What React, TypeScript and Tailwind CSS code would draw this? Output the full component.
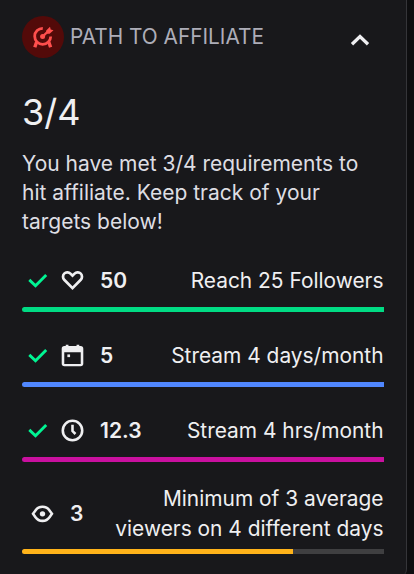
import type { ReactNode } from "react"

function CheckIcon() {
    return (
        <svg width="20" height="16" viewBox="0 0 20 16" fill="none" className="shrink-0">
            <path d="M1.3 6.9 7.5 12.7 18.2 2" stroke="#00f593" strokeWidth="2.9" />
        </svg>
    )
}

function HeartIcon() {
    return (
        <svg width="27" height="27" viewBox="0 0 20 20" fill="currentColor" className="shrink-0">
            <path
                fillRule="evenodd"
                clipRule="evenodd"
                d="M9.171 4.171A4 4 0 0 0 6.343 3H6a4 4 0 0 0-4 4v.343a4 4 0 0 0 1.172 2.829L10 17l6.828-6.828A4 4 0 0 0 18 7.343V7a4 4 0 0 0-4-4h-.343a4 4 0 0 0-2.829 1.172L10 5l-.829-.829zm.829 10l5.414-5.414A2 2 0 0 0 16 7.343V7a2 2 0 0 0-2-2h-.343a2 2 0 0 0-1.414.586L10 7.828 7.757 5.586A2 2 0 0 0 6.343 5H6a2 2 0 0 0-2 2v.343a2 2 0 0 0 .586 1.414L10 14.171z"
            />
        </svg>
    )
}

function CalendarIcon() {
    return (
        <svg width="27" height="27" viewBox="0 0 20 20" fill="currentColor" className="shrink-0">
            <path d="M5 2h2v1h6V2h2v1h1a2 2 0 0 1 2 2v11a2 2 0 0 1-2 2H4a2 2 0 0 1-2-2V5a2 2 0 0 1 2-2h1V2zM3.9 7.6v8.7h12.2V7.6H3.9z" fillRule="evenodd" />
            <path d="M6.2 9.2h2v2h-2z" />
        </svg>
    )
}

function ClockIcon() {
    return (
        <svg width="27" height="27" viewBox="0 0 20 20" fill="none" stroke="currentColor" strokeWidth="1.9" className="shrink-0">
            <circle cx="10" cy="10" r="7.2" />
            <path d="M10 5.8v4.6l2.2 2.2" />
        </svg>
    )
}

function EyeIcon() {
    return (
        <svg width="27" height="27" viewBox="0 0 20 20" fill="none" className="shrink-0">
            <path d="M3 9.5 4.8 7A6.3 6.3 0 0 1 10 4.3 6.3 6.3 0 0 1 15.2 7L17 9.5 15.2 12A6.3 6.3 0 0 1 10 14.7 6.3 6.3 0 0 1 4.8 12z" stroke="currentColor" strokeWidth="1.9" />
            <circle cx="10" cy="9.5" r="2" fill="currentColor" />
        </svg>
    )
}

function TargetIcon() {
    return (
        <svg width="22" height="22" viewBox="0 0 22 22" fill="none" stroke="#ff4f4d" className="shrink-0">
            {/* ring, open towards the dart */}
            <path d="M10.8 2.3A8 8 0 1 0 18.7 10.4" strokeWidth="2.8" />
            {/* legs */}
            <path d="M4.7 15.8 2.8 21.2M16.7 15.8l1.9 5.4" strokeWidth="3.4" />
            {/* dart */}
            <path d="M10.6 10.6 15.6 5.7" strokeWidth="2.3" />
            <path d="M14.2 7.8V4.6L18 .7l.7 2.8 2.8.7-3.9 3.6z" fill="#ff4f4d" stroke="none" />
            <circle cx="10.6" cy="10.6" r="2.5" fill="#ff4f4d" stroke="none" />
        </svg>
    )
}

function Progress({ percent, color }: { percent: number; color: string }) {
    return (
        <div className="h-[5px] w-full overflow-hidden rounded-l-full rounded-r-sm bg-[#3f3f41]">
            <div className={`h-full ${color}`} style={{ width: `${percent}%` }} />
        </div>
    )
}

type Goal = {
    icon: ReactNode
    value: string
    label: string
    color: string
}

const goals: Goal[] = [
    { icon: <HeartIcon />, value: "50", label: "Reach 25 Followers", color: "bg-[#00db84]" },
    { icon: <CalendarIcon />, value: "5", label: "Stream 4 days/month", color: "bg-[#5087ff]" },
    { icon: <ClockIcon />, value: "12.3", label: "Stream 4 hrs/month", color: "bg-[#c9109f]" },
]

export default function App() {
    return (
        <main className="h-[574px] w-[414px] overflow-hidden bg-[#0e0e10] font-['Inter',sans-serif] text-[#efeff1]">
            <section className="flex h-[577px] w-[407px] flex-col rounded-br-lg border-r border-[#353539] bg-[#18181b] pr-[22px] pl-[22px]">
                <header className="flex items-center pt-4">
                    <div className="flex size-[42px] items-center justify-center rounded-full bg-[#530a09]">
                        <TargetIcon />
                    </div>
                    <h2 className="ml-1.5 text-[20.8px] leading-[42px] whitespace-nowrap text-[#adadb8]">PATH TO AFFILIATE</h2>
                    <svg width="20" height="14" viewBox="0 0 20 14" fill="none" className="mt-1.5 mr-[14px] ml-auto">
                        <path d="M2 11.2 10 3.6l8 7.6" stroke="#efeff1" strokeWidth="3.3" />
                    </svg>
                </header>

                <p className="mt-8 text-[36px] leading-[44px]">3/4</p>
                <p className="mt-[15px] text-[21px] leading-[29px] whitespace-nowrap text-[#dedee3]">
                    You have met 3/4 requirements to
                    <br />
                    hit affiliate. Keep track of your
                    <br />
                    targets below!
                </p>

                <div className="mt-[23px] flex flex-col gap-[22px]">
                    {goals.map((g) => (
                        <div key={g.label}>
                            <div className="flex h-12 items-center pb-[5px] pl-[6px]">
                                <CheckIcon />
                                <span className="ml-[11px]">{g.icon}</span>
                                <span className="ml-[14px] text-[21px] font-semibold">{g.value}</span>
                                <span className="mr-[0.5px] ml-auto text-[20.9px] whitespace-nowrap">{g.label}</span>
                            </div>
                            <Progress percent={100} color={g.color} />
                        </div>
                    ))}

                    <div>
                        <div className="flex h-[65px] items-center pb-[5px]">
                            <span className="ml-[7px]"><EyeIcon /></span>
                            <span className="ml-[14px] text-[21px] font-semibold">3</span>
                            <span className="mr-[0.5px] ml-auto text-right text-[20.9px] leading-[30px] whitespace-nowrap">
                                Minimum of 3 average
                                <br />
                                viewers on 4 different days
                            </span>
                        </div>
                        <Progress percent={74.8} color="bg-[#ffb31a]" />
                    </div>
                </div>
            </section>
        </main>
    )
}
